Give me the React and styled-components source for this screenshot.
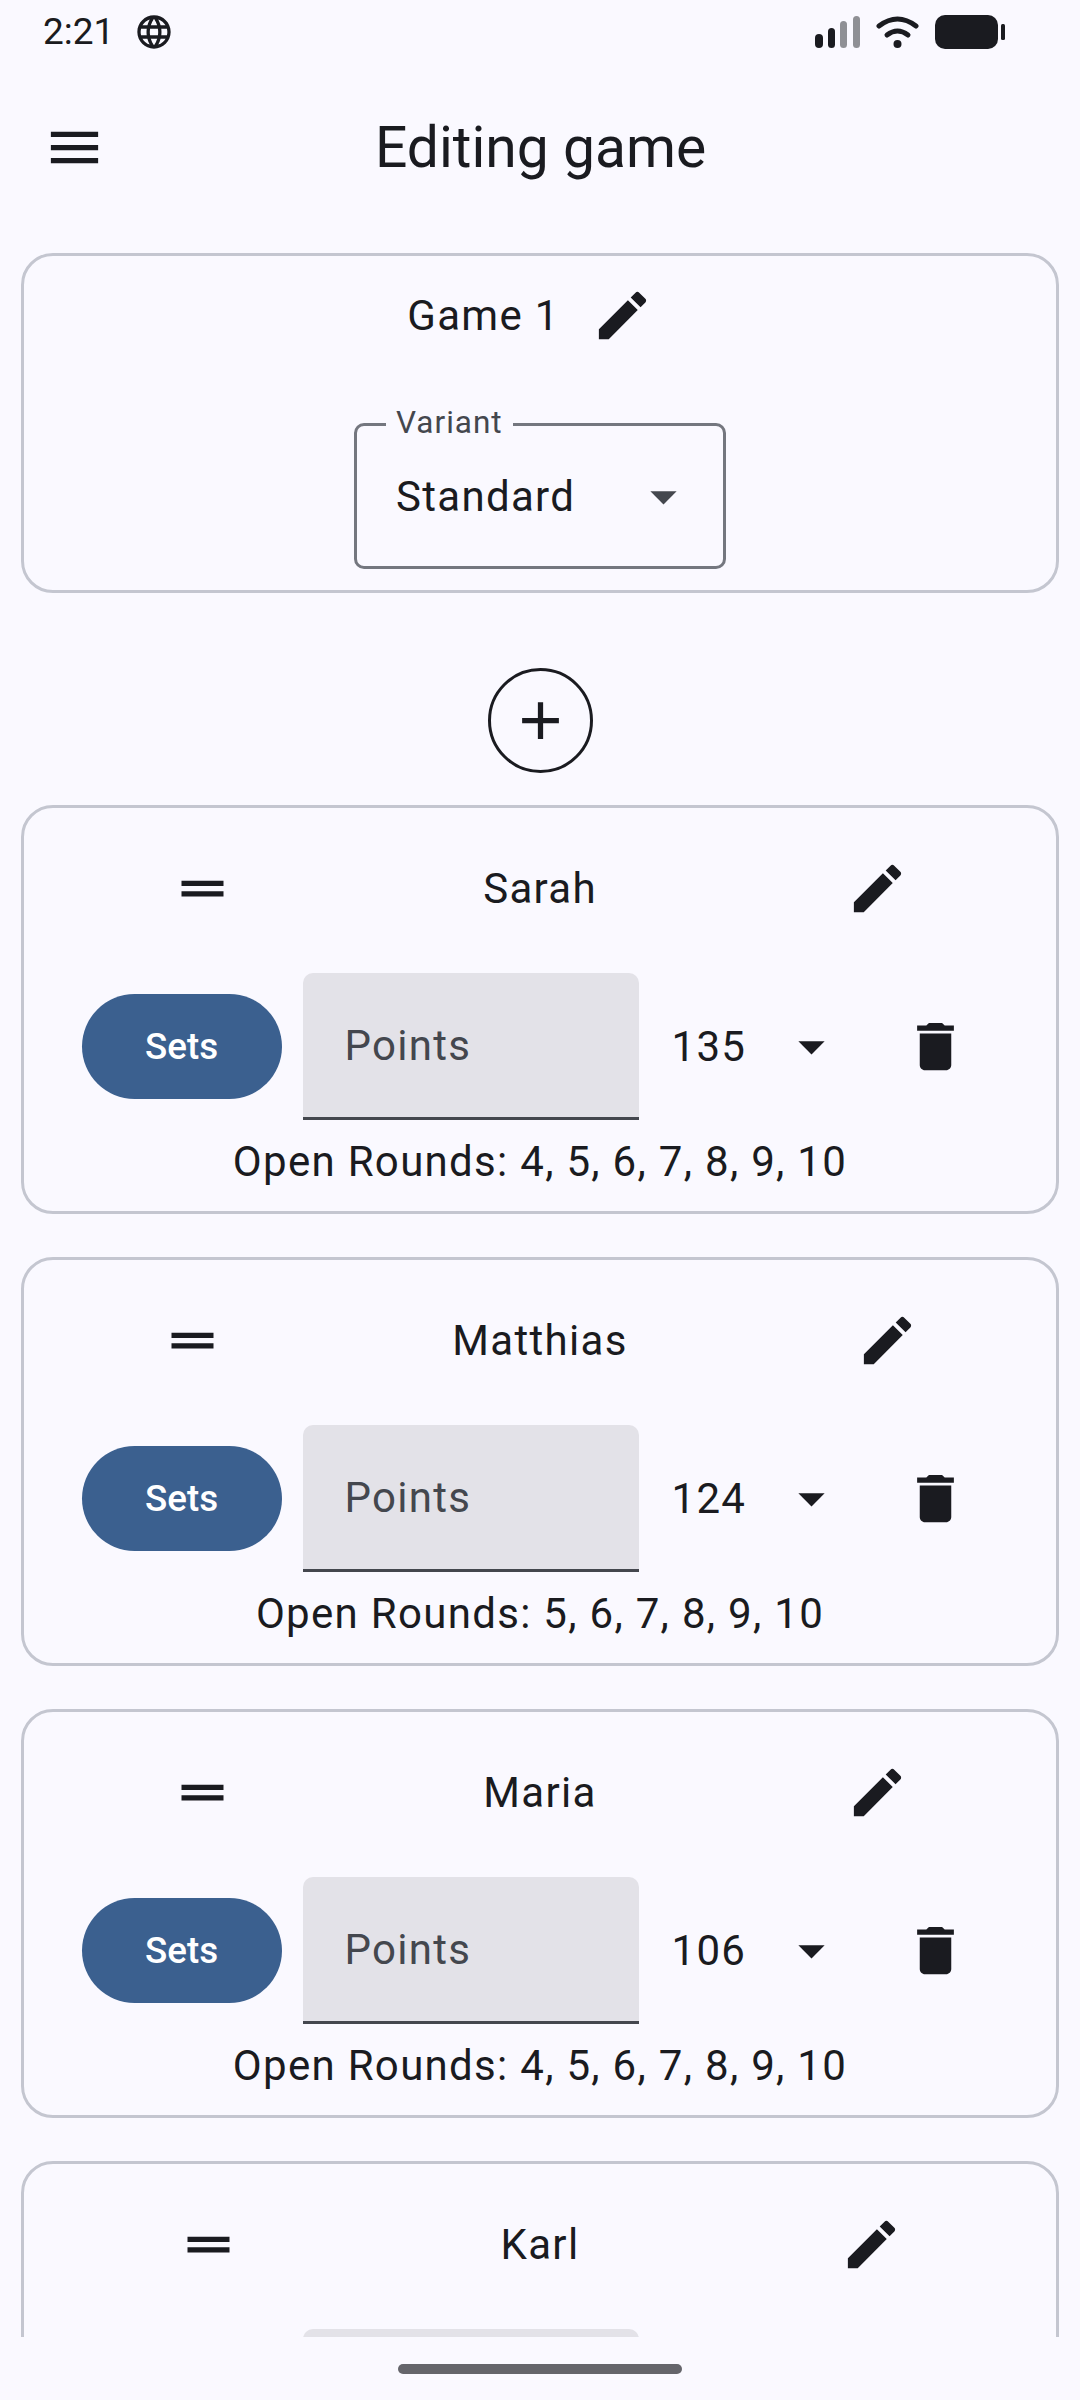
import React from 'react';
import styled, { createGlobalStyle } from 'styled-components';

const GlobalStyle = createGlobalStyle`
    html, body {
        margin: 0;
        padding: 0;
        background: #faf9ff;
    }
    * {
        box-sizing: border-box;
    }
`

const Page = styled.div`
    width: 1080px;
    height: 2400px;
    display: flex;
    flex-direction: column;
    overflow: hidden;
    background: #faf9ff;
    color: #1a1b20;
    font-family: Roboto, "Liberation Sans", sans-serif;
`
const StatusBar = styled.div`
    height: 63px;
    flex: none;
    display: flex;
    align-items: center;
    justify-content: space-between;
    padding: 0 75px 0 43px;
`
const StatusLeft = styled.div`
    display: flex;
    align-items: center;
    gap: 20px;
    font-size: 37px;
`
const AppBar = styled.header`
    height: 168px;
    flex: none;
    display: flex;
    align-items: center;
    position: relative;
    padding-left: 43px;
`
const Title = styled.h1`
    flex: 1;
    margin: 0 0 0 -105px;
    text-align: center;
    font-size: 57px;
    font-weight: 400;
`
const List = styled.main`
    flex: 1;
    min-height: 0;
    overflow: hidden;
    display: flex;
    flex-direction: column;
    padding: 22px 21px 0;
`
const Card = styled.section`
    flex: none;
    border: 3px solid #c4c6d0;
    border-radius: 32px;
    margin-bottom: 43px;
    padding: 17px 7px 18px;
    display: flex;
    flex-direction: column;
    align-items: center;
`
const GameCard = styled(Card)`
    height: 340px;
    padding: 0;
    margin-bottom: 75px;
`
const GameHeader = styled.div`
    height: 118px;
    display: flex;
    align-items: center;
    margin-left: 13px;
    font-size: 42px;
    letter-spacing: 1.3px;
`
const IconBox = styled.span`
    width: 126px;
    height: 126px;
    flex: none;
    display: flex;
    align-items: center;
    justify-content: center;
`
const Icon = styled.svg`
    width: ${props => props.$size || 63}px;
    height: ${props => props.$size || 63}px;
    fill: ${props => props.$color || '#1a1b20'};
    display: block;
    flex: none;
`
const VariantBox = styled.div`
    position: relative;
    width: 372px;
    height: 146px;
    margin-top: 49px;
    border: 3px solid #74777f;
    border-radius: 10px;
    display: flex;
    align-items: center;
    justify-content: space-between;
    padding: 0 28px 0 39px;
    font-size: 42px;
    letter-spacing: 1.3px;
`
const VariantLabel = styled.span`
    position: absolute;
    top: -21px;
    left: 29px;
    padding: 0 10px;
    background: #faf9ff;
    color: #44474e;
    font-size: 31.5px;
    line-height: 36px;
    letter-spacing: 1px;
`
const AddRow = styled.div`
    flex: none;
    display: flex;
    justify-content: center;
    margin-bottom: 32px;
`
const AddButton = styled.button`
    width: 105px;
    height: 105px;
    padding: 0;
    border: 3px solid #1a1b20;
    border-radius: 50%;
    background: transparent;
    display: flex;
    align-items: center;
    justify-content: center;
`
const PlayerHeader = styled.div`
    width: 100%;
    display: flex;
    align-items: center;
    justify-content: space-around;
    margin-bottom: 22px;
`
const PlayerName = styled.div`
    font-size: 42px;
    letter-spacing: 1.3px;
`
const ScoreRow = styled.div`
    display: flex;
    align-items: center;
    gap: 21px;
`
const SetsButton = styled.button`
    width: 200px;
    height: 105px;
    border: 0;
    border-radius: 53px;
    background: #3b608f;
    color: #fff;
    font-family: inherit;
    font-size: 36.75px;
    font-weight: 500;
`
const PointsInput = styled.input`
    width: 336px;
    height: 147px;
    border: 0;
    border-bottom: 3px solid #44474e;
    border-radius: 10px 10px 0 0;
    background: #e3e2e8;
    padding: 0 42px;
    font-family: inherit;
    font-size: 42px;
    letter-spacing: 1.3px;
    &::placeholder {
        color: #44474e;
        opacity: 1;
    }
`
const RoundSelect = styled.div`
    width: 192px;
    display: flex;
    align-items: center;
    justify-content: space-between;
    padding: 0 9px 0 12px;
    font-size: 42px;
    letter-spacing: 1.3px;
`
const OpenRounds = styled.div`
    margin-top: 10px;
    font-size: 42px;
    line-height: 63px;
    letter-spacing: 1.3px;
`
const HomeBar = styled.div`
    height: 63px;
    flex: none;
    display: flex;
    justify-content: center;
    padding-top: 27px;
`
const HomePill = styled.div`
    width: 284px;
    height: 10px;
    border-radius: 5px;
    background: #65656b;
`

const paths = {
    menu: 'M3 18h18v-2H3v2zm0-5h18v-2H3v2zm0-7v2h18V6H3z',
    edit: 'M3 17.25V21h3.75L17.81 9.94l-3.75-3.75L3 17.25zM20.71 7.04c.39-.39.39-1.02 0-1.41l-2.34-2.34c-.39-.39-1.02-.39-1.41 0l-1.83 1.83 3.75 3.75 1.83-1.83z',
    drag: 'M20 9H4v2h16V9zM4 15h16v-2H4v2z',
    trash: 'M6 19c0 1.1.9 2 2 2h8c1.1 0 2-.9 2-2V7H6v12zM19 4h-3.5l-1-1h-5l-1 1H5v2h14V4z',
    drop: 'M7 10l5 5 5-5z',
    add: 'M19 13h-6v6h-2v-6H5v-2h6V5h2v6h6v2z',
    globe: 'M11.99 2C6.47 2 2 6.48 2 12s4.47 10 9.99 10C17.52 22 22 17.52 22 12S17.52 2 11.99 2zm6.93 6h-2.95c-.32-1.25-.78-2.45-1.38-3.56 1.84.63 3.37 1.91 4.33 3.56zM12 4.04c.83 1.2 1.48 2.53 1.91 3.96h-3.82c.43-1.43 1.08-2.76 1.91-3.96zM4.26 14C4.1 13.36 4 12.69 4 12s.1-1.36.26-2h3.38c-.08.66-.14 1.32-.14 2 0 .68.06 1.34.14 2H4.26zm.82 2h2.95c.32 1.25.78 2.45 1.38 3.56-1.84-.63-3.37-1.9-4.33-3.56zm2.95-8H5.08c.96-1.66 2.49-2.93 4.33-3.56C8.81 5.55 8.35 6.75 8.03 8zM12 19.96c-.83-1.2-1.48-2.53-1.91-3.96h3.82c-.43 1.43-1.08 2.76-1.91 3.96zM14.34 14H9.66c-.09-.66-.16-1.32-.16-2 0-.68.07-1.35.16-2h4.68c.09.65.16 1.32.16 2 0 .68-.07 1.34-.16 2zm.25 5.56c.6-1.11 1.06-2.31 1.38-3.56h2.95c-.96 1.65-2.49 2.93-4.33 3.56zM16.36 14c.08-.66.14-1.32.14-2 0-.68-.06-1.34-.14-2h3.38c.16.64.26 1.31.26 2s-.1 1.36-.26 2h-3.38z'
}

const MaterialIcon = ({ name, size, color }) => (
    <Icon viewBox='0 0 24 24' $size={size} $color={color}>
        <path d={paths[name]} />
    </Icon>
)

// signal, wifi and battery as one drawing
const StatusIcons = () => (
    <svg width='190' height='36' viewBox='815 13 190 36'>
        <rect x='815' y='33' width='8' height='14' rx='4' fill='#1a1b20' />
        <rect x='828' y='27' width='7' height='20' rx='3.5' fill='#1a1b20' />
        <rect x='840' y='20' width='7' height='27' rx='3.5' fill='#8f9095' />
        <rect x='853' y='15' width='7' height='32' rx='3.5' fill='#8f9095' />
        <path d='M879 25 Q897.500 11 916 25' fill='none' stroke='#1a1b20' strokeWidth='5' strokeLinecap='round' />
        <path d='M887 34 Q897.500 26 908 34' fill='none' stroke='#1a1b20' strokeWidth='5' strokeLinecap='round' />
        <circle cx='897.500' cy='43' r='4' fill='#1a1b20' />
        <rect x='935' y='14' width='63' height='34' rx='10' fill='#1a1b20' />
        <rect x='1001' y='23' width='4' height='16' rx='1.500' fill='#1a1b20' />
    </svg>
)

const players = [
    { name: 'Sarah', total: 135, rounds: '4, 5, 6, 7, 8, 9, 10' },
    { name: 'Matthias', total: 124, rounds: '5, 6, 7, 8, 9, 10' },
    { name: 'Maria', total: 106, rounds: '4, 5, 6, 7, 8, 9, 10' },
    { name: 'Karl' }
]

function PlayerCard({ player }) {
    return (
        <Card>
            <PlayerHeader>
                <IconBox><MaterialIcon name='drag' /></IconBox>
                <PlayerName>{player.name}</PlayerName>
                <IconBox><MaterialIcon name='edit' /></IconBox>
            </PlayerHeader>
            <ScoreRow>
                <SetsButton>Sets</SetsButton>
                <PointsInput placeholder='Points' />
                <RoundSelect>
                    {player.total}
                    <MaterialIcon name='drop' />
                </RoundSelect>
                <IconBox><MaterialIcon name='trash' /></IconBox>
            </ScoreRow>
            {player.rounds && <OpenRounds>Open Rounds: {player.rounds}</OpenRounds>}
        </Card>
    )
}

export default function App() {
    return (
        <Page>
            <GlobalStyle />
            <StatusBar>
                <StatusLeft>
                    2:21
                    <MaterialIcon name='globe' size={40} />
                </StatusLeft>
                <StatusIcons />
            </StatusBar>
            <AppBar>
                <MaterialIcon name='menu' />
                <Title>Editing game</Title>
            </AppBar>
            <List>
                <GameCard>
                    <GameHeader>
                        Game 1
                        <IconBox><MaterialIcon name='edit' /></IconBox>
                    </GameHeader>
                    <VariantBox>
                        <VariantLabel>Variant</VariantLabel>
                        Standard
                        <MaterialIcon name='drop' color='#44474e' />
                    </VariantBox>
                </GameCard>
                <AddRow>
                    <AddButton><MaterialIcon name='add' /></AddButton>
                </AddRow>
                {players.map(player => <PlayerCard key={player.name} player={player} />)}
            </List>
            <HomeBar><HomePill /></HomeBar>
        </Page>
    )
}
